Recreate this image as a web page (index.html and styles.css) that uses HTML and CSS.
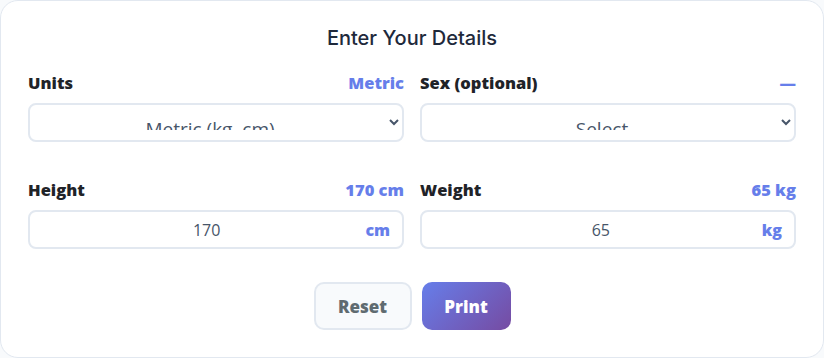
FILE: index.html
```html
<!DOCTYPE html>
<html lang="en">
<head>
<meta charset="UTF-8">
<meta name="viewport" content="width=device-width, initial-scale=1.0">
<title>Enter Your Details</title>
<link rel="stylesheet" href="styles.css">
</head>
<body>
<div class="card">
    <h2 class="title">Enter Your Details</h2>
    <div class="grid">
        <div class="field">
            <div class="label-row">
                <label for="units">Units</label>
                <span class="hint">Metric</span>
            </div>
            <select id="units" class="control select">
                <option>Metric (kg, cm)</option>
                <option>Imperial (lb, in)</option>
            </select>
        </div>
        <div class="field">
            <div class="label-row">
                <label for="sex">Sex (optional)</label>
                <span class="hint">—</span>
            </div>
            <select id="sex" class="control select">
                <option>Select</option>
                <option>Male</option>
                <option>Female</option>
            </select>
        </div>
        <div class="field">
            <div class="label-row">
                <label for="height">Height</label>
                <span class="hint">170 cm</span>
            </div>
            <div class="control input-wrap">
                <input type="text" id="height" value="170">
                <span class="suffix">cm</span>
            </div>
        </div>
        <div class="field">
            <div class="label-row">
                <label for="weight">Weight</label>
                <span class="hint">65 kg</span>
            </div>
            <div class="control input-wrap">
                <input type="text" id="weight" value="65">
                <span class="suffix">kg</span>
            </div>
        </div>
    </div>
    <div class="actions">
        <button class="btn reset">Reset</button>
        <button class="btn print">Print</button>
    </div>
</div>
</body>
</html>
```
FILE: styles.css
```css
* {
    box-sizing: border-box;
}
html, body {
    margin: 0;
    background: #f8fafc;
}
.card {
    width: 824px;
    height: 358px;
    background: #fff;
    border: 1px solid #e2e8f0;
    border-radius: 18px;
    padding: 24px 27px 0 27px;
}
.title {
    margin: 0 0 22px 0;
    text-align: center;
    font-family: Inter, sans-serif;
    font-weight: 500;
    font-size: 20px;
    line-height: 26px;
    color: #1e293b;
}
.grid {
    display: grid;
    grid-template-columns: 1fr 1fr;
    column-gap: 16px;
    row-gap: 38px;
}
.label-row {
    display: flex;
    justify-content: space-between;
    align-items: baseline;
    margin-bottom: 10px;
    font-family: "Open Sans", sans-serif;
    font-weight: 800;
    font-size: 16.5px;
    line-height: 20px;
}
.label-row label {
    color: #1f2328;
}
.hint {
    color: #667eea;
}
.control {
    width: 100%;
    height: 39px;
    border: 2px solid #e2e8f0;
    border-radius: 8px;
    background: #fff;
}
.select {
    font-family: "Open Sans", sans-serif;
    font-size: 19px;
    color: #475569;
    text-align: center;
    text-align-last: center;
    padding: 10px 10px 10px 10px;
    line-height: 24px;
    overflow: hidden;
}
.input-wrap {
    display: flex;
    align-items: center;
    padding: 0 12px;
}
.input-wrap input {
    flex: 1;
    border: none;
    outline: none;
    background: transparent;
    text-align: center;
    font-family: "Open Sans", sans-serif;
    font-size: 16px;
    color: #475569;
    padding: 0 0 0 6px;
    min-width: 0;
}
.suffix {
    font-family: "Open Sans", sans-serif;
    font-weight: 800;
    font-size: 16px;
    color: #667eea;
}
.actions {
    display: flex;
    justify-content: center;
    gap: 10px;
    margin-top: 33px;
}
.btn {
    height: 48px;
    border-radius: 10px;
    font-family: "Open Sans", sans-serif;
    font-weight: 800;
    font-size: 17px;
    cursor: pointer;
}
.reset {
    width: 98px;
    background: #f8fafc;
    border: 2px solid #e2e8f0;
    color: #5f6b70;
}
.print {
    width: 89px;
    border: none;
    color: #fff;
    background: linear-gradient(135deg, #667eea, #764ba2);
}
```
